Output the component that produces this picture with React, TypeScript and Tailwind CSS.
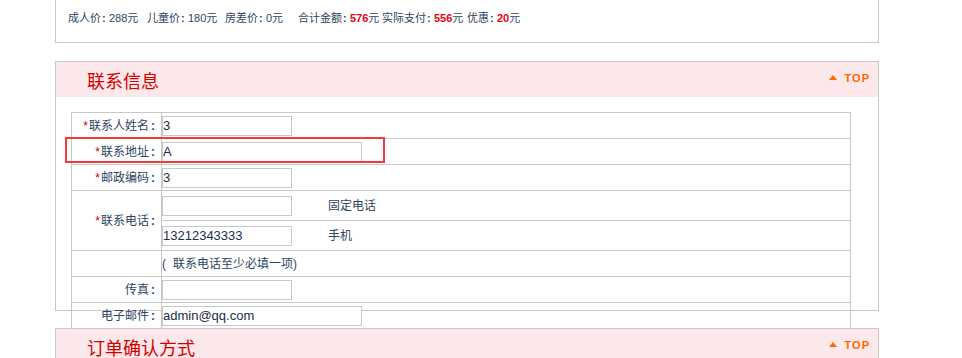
import React from "react";

const Colon = ({ w = "w-[8px]" }: { w?: string }) => (
  <span className={`inline-block ${w} pl-[1px] font-bold`}>:</span>
);

const TableColon = () => <span className="inline-block w-[12px] pl-[2px] font-bold">:</span>;

const Top = () => (
  <div className="flex items-center mb-[4px] text-[#f60]">
    <svg width="8" height="5" viewBox="0 0 8 5" className="block">
      <polygon points="0,5 4,0 8,5" fill="#f60" />
    </svg>
    <span className="ml-[8px] text-[11px] leading-[12px] font-bold tracking-[1px] font-['Liberation_Sans',Arial,sans-serif]">
      TOP
    </span>
  </div>
);

const Req = () => <span className="text-[#cc0000] font-['Liberation_Sans',sans-serif] mr-[1px]">*</span>;

const Label = ({ req, children }: { req?: boolean; children: React.ReactNode }) => (
  <div className="w-[90px] shrink-0 border-r border-[#c8c8c8] flex items-center justify-end whitespace-nowrap">
    {req && <Req />}
    <span>{children}</span>
    <TableColon />
  </div>
);

const Field = ({ w, value }: { w: string; value?: string }) => (
  <input
    readOnly
    defaultValue={value ?? ""}
    className={`${w} h-[20px] border border-[#c8c8c8] bg-white text-[13px] leading-[18px] text-[#1c2c48] font-['Liberation_Sans',Arial,sans-serif] px-0 outline-none`}
  />
);

const Row = ({ children, h = "h-[26px]" }: { children: React.ReactNode; h?: string }) => (
  <div className={`flex ${h} border-b border-[#c8c8c8]`}>{children}</div>
);

const Red = ({ children }: { children: React.ReactNode }) => (
  <b className="text-[#e60012] font-bold">{children}</b>
);

export default function App() {
  return (
    <div className="relative w-[962px] h-[358px] overflow-hidden bg-white text-[#2c4462] font-['Liberation_Sans','Noto_Sans_CJK_SC',sans-serif]">
      <div className="ml-[55px] w-[824px]">
        {/* price summary panel */}
        <div className="h-[43px] border-x border-b border-[#c8c8c8] pl-[12px] pt-[11px] flex text-[11px] leading-[14px] whitespace-nowrap">
          <span className="inline-block w-[79px]">
            成人价<Colon />288元
          </span>
          <span className="inline-block w-[78px]">
            儿童价<Colon />180元
          </span>
          <span className="inline-block w-[73px]">
            房差价<Colon />0元
          </span>
          <span className="inline-block w-[84px]">
            合计金额<Colon />
            <Red>576</Red>元
          </span>
          <span className="inline-block w-[85px]">
            实际支付<Colon />
            <Red>556</Red>元
          </span>
          <span className="inline-block">
            优惠<Colon />
            <Red>20</Red>元
          </span>
        </div>

        {/* contact info panel */}
        <div className="mt-[18px] h-[250px] border border-[#c8c8c8]">
          <div className="h-[35px] bg-[#fce8ea] flex items-center justify-between pl-[31px] pr-[8px]">
            <span className="text-[18px] leading-[20px] text-[#d40000] font-['Noto_Sans_CJK_SC',sans-serif]">联系信息</span>
            <Top />
          </div>
          <div className="mt-[15px] ml-[15px] w-[780px] border-x border-t border-[#c8c8c8] text-[12px] leading-[14px]">
            <Row>
              <Label req>联系人姓名</Label>
              <div className="flex-1 flex items-center">
                <Field w="w-[130px]" value="3" />
              </div>
            </Row>
            <Row>
              <Label req>联系地址</Label>
              <div className="flex-1 flex items-center">
                <Field w="w-[200px]" value="A" />
              </div>
            </Row>
            <Row>
              <Label req>邮政编码</Label>
              <div className="flex-1 flex items-center">
                <Field w="w-[130px]" value="3" />
              </div>
            </Row>
            <Row h="h-[60px]">
              <Label req>联系电话</Label>
              <div className="flex-1 flex flex-col">
                <div className="h-[30px] border-b border-[#c8c8c8] flex items-center">
                  <Field w="w-[130px]" />
                  <span className="ml-[36px]">固定电话</span>
                </div>
                <div className="flex-1 flex items-center">
                  <Field w="w-[130px]" value="13212343333" />
                  <span className="ml-[36px]">手机</span>
                </div>
              </div>
            </Row>
            <Row>
              <div className="w-[90px] shrink-0 border-r border-[#c8c8c8]" />
              <div className="flex-1 flex items-center whitespace-nowrap">
                <span className="inline-block w-[11px]">(</span>
                联系电话至少必填一项)
              </div>
            </Row>
            <Row>
              <Label>传真</Label>
              <div className="flex-1 flex items-center">
                <Field w="w-[130px]" />
              </div>
            </Row>
            <Row>
              <Label>电子邮件</Label>
              <div className="flex-1 flex items-center">
                <Field w="w-[200px]" value="admin@qq.com" />
              </div>
            </Row>
          </div>
        </div>

        {/* order confirmation panel */}
        <div className="mt-[17px] h-[60px] border border-[#c8c8c8]">
          <div className="h-[35px] bg-[#fce8ea] flex items-center justify-between pl-[31px] pr-[8px]">
            <span className="text-[18px] leading-[20px] text-[#d40000] font-['Noto_Sans_CJK_SC',sans-serif]">订单确认方式</span>
            <Top />
          </div>
        </div>
      </div>

      {/* red highlight annotation */}
      <div className="absolute left-[65px] top-[137px] w-[320px] h-[26px] border-2 border-[#f53a3a] pointer-events-none" />
    </div>
  );
}
